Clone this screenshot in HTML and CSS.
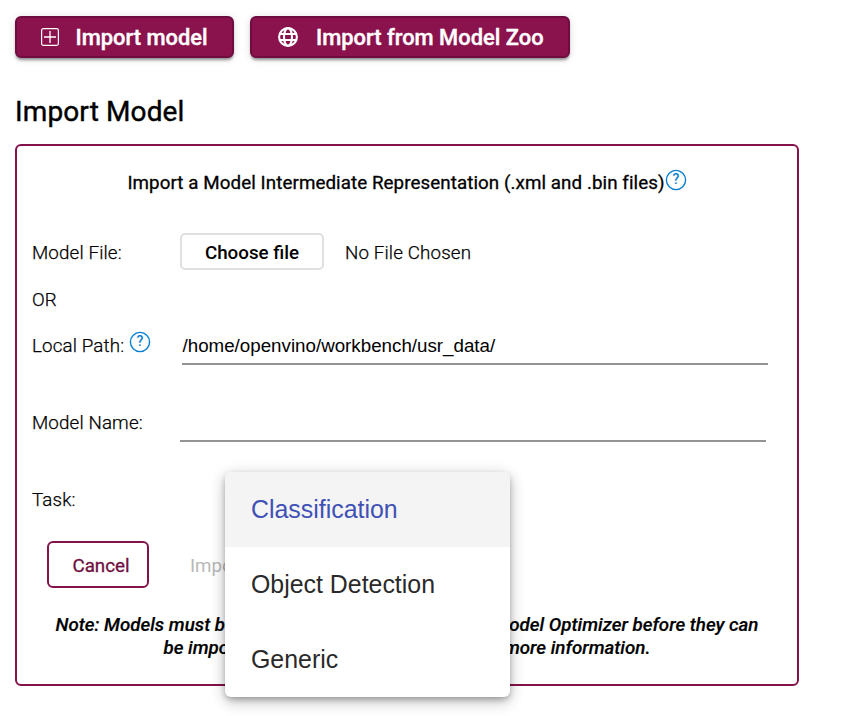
FILE: index.html
```html
<!DOCTYPE html>
<html lang="en">
<head>
<meta charset="utf-8">
<title>Import Model</title>
<link rel="stylesheet" href="styles.css">
</head>
<body>
<nav class="tabs">
  <button class="tab tab-import">
    <svg class="plus" viewBox="0 0 18 18" fill="none" stroke="#fff"><rect x=".6" y=".6" width="16.8" height="16.8" rx="1.8" stroke-width="1.2"/><path d="M9 3v12M3 9h12" stroke-width="1.3"/></svg>
    <span>Import model</span>
  </button>
  <button class="tab tab-zoo">
    <svg class="globe" viewBox="0 0 20 20" fill="none" stroke="#fff" stroke-width="2.1"><circle cx="10" cy="10" r="8.9"/><ellipse cx="10" cy="10" rx="4" ry="8.9"/><path d="M1.8 7h16.4M1.8 13h16.4"/></svg>
    <span>Import from Model Zoo</span>
  </button>
</nav>
<h1>Import Model</h1>
<main class="panel">
  <div class="intro">
    <span>Import a Model Intermediate Representation (.xml and .bin files)</span>
    <svg class="help" viewBox="0 0 22 22"><circle cx="11" cy="11" r="9.6" fill="none" stroke="#0b7fcf" stroke-width="1.4"/><text x="11" y="15.4" text-anchor="middle">?</text></svg>
  </div>
  <div class="row row-file">
    <label>Model File:</label>
    <button class="choose">Choose file</button>
    <span class="no-file">No File Chosen</span>
  </div>
  <div class="row row-or"><label>OR</label></div>
  <div class="row row-path">
    <label>Local Path:
      <svg class="help" viewBox="0 0 22 22"><circle cx="11" cy="11" r="9.6" fill="none" stroke="#0b7fcf" stroke-width="1.4"/><text x="11" y="15.4" text-anchor="middle">?</text></svg>
    </label>
    <div class="field field-path">/home/openvino/workbench/usr_data/</div>
  </div>
  <div class="row row-name">
    <label>Model Name:</label>
    <div class="field"></div>
  </div>
  <div class="row row-task">
    <label>Task:</label>
  </div>
  <div class="actions">
    <button class="cancel">Cancel</button>
    <button class="submit" disabled>Import</button>
  </div>
  <div class="note">
    <p class="line-one"><span>Note: Models must be converted</span><span>by Model Optimizer before they can</span></p>
    <p class="line-two"><span>be imported. See docs</span><span>for more information.</span></p>
  </div>
</main>
<ul class="menu">
  <li class="active">Classification</li>
  <li>Object Detection</li>
  <li>Generic</li>
</ul>
</body>
</html>
```
FILE: styles.css
```css
* { box-sizing: border-box; }
body {
  margin: 0;
  padding: 16px 0 0 15px;
  height: 716px;
  overflow: hidden;
  background: #fff;
  color: #000;
  font: 18.75px/24px Roboto, sans-serif;
}
button { font: inherit; margin: 0; padding: 0; background: #fff; color: #000; white-space: nowrap; }
.tabs { display: flex; gap: 16px; height: 42px; }
.tab {
  display: flex;
  align-items: center;
  border: 2px solid #6f0d41;
  border-radius: 6px;
  background: #8a134e;
  color: #fff;
  font-size: 21.9px;
  font-weight: 500;
  -webkit-text-stroke: .4px #fff;
  box-shadow: 0 3px 3px -1px rgba(0, 0, 0, .4), 0 1px 8px rgba(0, 0, 0, .12);
}
.tab span { padding-top: 1px; }
.tab-import { width: 219px; padding-left: 24px; gap: 16.5px; }
.tab-zoo { width: 320px; padding-left: 26px; gap: 18px; }
.plus { width: 18px; height: 18px; }
.globe { width: 20px; height: 20px; }
h1 { margin: 37px 0 0; height: 33px; font-size: 28px; line-height: 34px; font-weight: 400; letter-spacing: .12px; -webkit-text-stroke: .4px #000; }
.panel {
  width: 784px;
  height: 542px;
  margin-top: 16px;
  padding: 25px 15px 0;
  border: 2px solid #84124b;
  border-radius: 6px;
}
.intro { display: flex; justify-content: center; height: 24px; margin-bottom: 38px; font-weight: 400; letter-spacing: .08px; -webkit-text-stroke: .3px #000; white-space: nowrap; }
.help { width: 22px; height: 22px; flex: none; margin-top: -2px; }
.help text { font: 500 14px Roboto, sans-serif; letter-spacing: 0; fill: #0b7fcf; stroke: none; -webkit-text-stroke: 0; }
.row { display: flex; align-items: center; font-weight: 300; letter-spacing: .14px; -webkit-text-stroke: .25px #000; }
.row label { display: flex; flex: none; width: 148px; white-space: nowrap; }
.row-file { height: 37px; }
.row-file label, .no-file { padding-top: 2px; }
.choose { width: 144px; height: 37px; padding-top: 2px; border: 2px solid #e0e0e0; border-radius: 5px; font-weight: 500; letter-spacing: 0; -webkit-text-stroke: 0; }
.no-file { margin-left: 21px; }
.row-or { height: 24px; margin-top: 18px; }
.row-path { height: 36px; margin-top: 18px; align-items: flex-start; padding-top: 4px; }
.row-path .help { margin: -3px 0 0 5px; }
.field { width: 586px; height: 32px; border-bottom: 2px solid #949494; }
.row-path .field-path { margin-left: 2px; padding-left: .5px; height: 31px; font: 18.75px/24px "Liberation Sans", sans-serif; letter-spacing: 0; -webkit-text-stroke: 0; }
.row-name { height: 36px; margin-top: 40px; align-items: flex-end; }
.row-name label { height: 31px; }
.row-task { height: 24px; margin-top: 46px; }
.actions { display: flex; height: 47px; margin: 29px 0 0 15px; }
.actions button { padding-top: 2px; }
.actions .cancel { width: 102px; border: 2px solid #84124b; border-radius: 6px; color: #6f0d41; padding-left: 6px; -webkit-text-stroke: .3px #6f0d41; }
.actions .submit { border: 0; margin-left: 41px; color: #b8b8b8; }
.note { margin-top: 26px; font-style: italic; font-weight: 500; line-height: 23px; -webkit-text-stroke: .2px #000; }
.note p { display: flex; justify-content: space-between; margin: 0 auto; white-space: nowrap; }
.line-one { width: 703px; }
.line-two { width: 487px; }
.menu {
  position: absolute;
  left: 225px;
  top: 472px;
  width: 285px;
  height: 225px;
  margin: 0;
  padding: 0;
  overflow: hidden;
  list-style: none;
  background: #fff;
  border-radius: 6px;
  box-shadow: 0 3px 6px -1px rgba(0, 0, 0, .3), 0 6px 16px rgba(0, 0, 0, .14), 0 2px 16px rgba(0, 0, 0, .12);
  color: #2a2a2a;
  font: 24.9px/75px "Liberation Sans", sans-serif;
}
.menu li { height: 75px; padding-left: 26px; }
.menu .active { background: #f4f4f4; color: #3f51b5; }
```
